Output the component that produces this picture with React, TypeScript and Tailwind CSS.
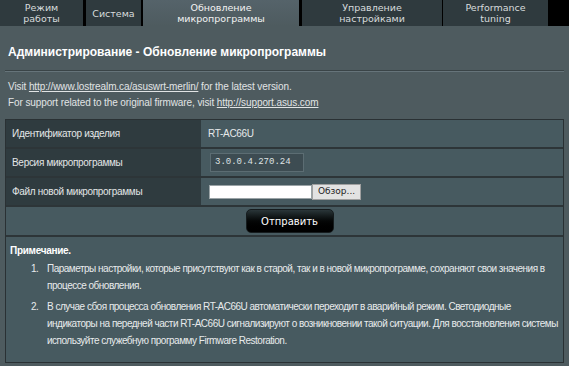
const tabs = [
  { label: ['Режим', 'работы'], w: 'w-[83px]', ml: 'ml-0' },
  { label: ['Система'], w: 'w-[55px]', ml: 'ml-[3px]' },
  { label: ['Обновление', 'микропрограммы'], w: 'w-[156px]', ml: 'ml-[2px]', active: true },
  { label: ['Управление', 'настройками'], w: 'w-[140px]', ml: 'ml-[3px]' },
  { label: ['Performance', 'tuning'], w: 'w-[105px]', ml: 'ml-[1px]' },
];

const rows = [
  { label: 'Идентификатор изделия', kind: 'text' },
  { label: 'Версия микропрограммы', kind: 'version' },
  { label: 'Файл новой микропрограммы', kind: 'file' },
];

export default function App() {
  return (
    <div className="w-[569px] h-[366px] overflow-hidden bg-[#4e5b5f] text-[#e6e9ea] font-['Liberation_Sans',Arial,sans-serif]">
      {/* Tabs */}
      <div className="flex h-[26px] bg-black">
        {tabs.map((t) => (
          <div
            key={t.label.join(' ')}
            className={`${t.w} ${t.ml} flex flex-col items-center justify-center text-[9.5px] leading-[11px] font-['DejaVu_Sans',Verdana,sans-serif] ${
              t.active ? 'bg-gradient-to-b from-[#55636a] to-[#4e5b5f] text-[#f2f2f2]' : 'bg-[#2f3a3e] text-[#d8dcdd]'
            }`}
          >
            {t.label.map((l) => (
              <span key={l}>{l}</span>
            ))}
          </div>
        ))}
      </div>

      <div className="px-[5px]">
        {/* Title */}
        <div className="pt-[18px] pb-[10px] pl-[3px] border-b border-[#3a4447] shadow-[0_1px_0_#66747a] text-[12px] leading-[16px] font-bold text-white">
          Администрирование - Обновление микропрограммы
        </div>

        {/* Links */}
        <div className="pt-[8px] pl-[3px] text-[10px] leading-[16px] tracking-[-0.1px] text-[#e1e4e5]">
          <div>
            Visit <span className="underline">http://www.lostrealm.ca/asuswrt-merlin/</span> for the latest version.
          </div>
          <div>
            For support related to the original firmware, visit{' '}
            <span className="underline">http://support.asus.com</span>
          </div>
        </div>

        {/* Table */}
        <div className="mt-[8px] border border-[#2a3134] bg-[#475a60]">
          {rows.map((r) => (
            <div key={r.label} className="flex h-[29px] border-b-2 border-[#2d3538]">
              <div className="w-[195px] bg-[#2f3b3f] flex items-center pl-[6px] text-[10px] tracking-[-0.3px] text-[#e3e6e7]">
                {r.label}
              </div>
              <div className="flex-1 flex items-center pl-[7px] text-[10px] tracking-[-0.3px]">
                {r.kind === 'text' && <span>RT-AC66U</span>}
                {r.kind === 'version' && (
                  <div className="ml-[2px] w-[94px] h-[19px] bg-[#3d4c52] border border-[#5c6d73] flex items-center pl-[4px] text-[9px] tracking-normal font-['Liberation_Mono',monospace] text-[#dfe3e4]">
                    3.0.0.4.270.24
                  </div>
                )}
                {r.kind === 'file' && (
                  <div className="ml-[1px] flex items-center">
                    <div className="w-[103px] h-[14px] bg-white border border-[#9aa3a6]" />
                    <div className="w-[49px] h-[16px] bg-[#e2e2e2] border border-[#a0a0a0] flex items-center justify-center text-[9px] tracking-normal text-[#222] font-['DejaVu_Sans',sans-serif]">
                      Обзор...
                    </div>
                  </div>
                )}
              </div>
            </div>
          ))}

          {/* Submit */}
          <div className="flex justify-center h-[30px] items-center border-b-2 border-[#2d3538] bg-[#475a60]">
            <button className="ml-[10px] w-[88px] h-[24px] rounded-[5px] bg-gradient-to-b from-[#2a3639] via-[#050707] to-black border border-[#161c1e] text-white text-[10px] font-['DejaVu_Sans',sans-serif]">
              Отправить
            </button>
          </div>

          {/* Notes */}
          <div className="pl-[4px] pr-[1px] pt-[5px] pb-[13px] text-[10px] leading-[17px] tracking-[-0.5px] text-[#e8ebec]">
            <div className="font-bold text-white tracking-[-0.3px]">Примечание.</div>
            <ol className="mt-[1px] pl-[21px] flex flex-col gap-[4px]">
              <li className="flex">
                <span className="w-[16px] shrink-0">1.</span>
                <span>
                  Параметры настройки, которые присутствуют как в старой, так и в новой микропрограмме, сохраняют свои значения в процессе обновления.
                </span>
              </li>
              <li className="flex">
                <span className="w-[16px] shrink-0">2.</span>
                <span>
                  В случае сбоя процесса обновления RT-AC66U автоматически переходит в аварийный режим. Светодиодные индикаторы на передней части RT-AC66U сигнализируют о возникновении такой ситуации. Для восстановления системы используйте служебную программу Firmware Restoration.
                </span>
              </li>
            </ol>
          </div>
        </div>
      </div>
    </div>
  );
}
